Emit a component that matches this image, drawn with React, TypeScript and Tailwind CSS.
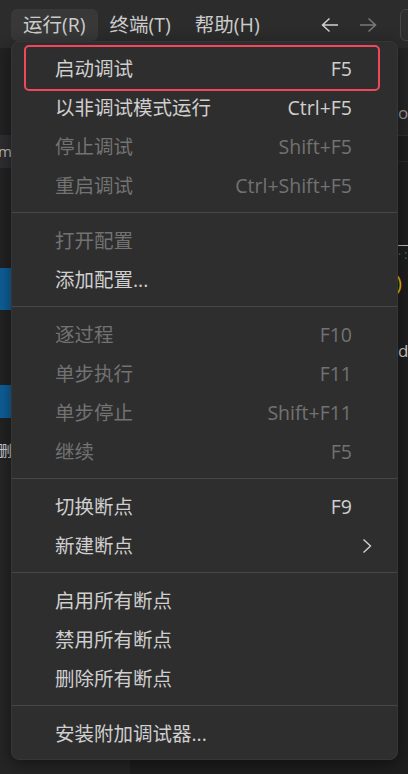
import { ReactNode } from 'react';

type Item = {
  label: string;
  shortcut?: string;
  disabled?: boolean;
  submenu?: boolean;
};

const groups: Item[][] = [
  [
    { label: '启动调试', shortcut: 'F5' },
    { label: '以非调试模式运行', shortcut: 'Ctrl+F5' },
    { label: '停止调试', shortcut: 'Shift+F5', disabled: true },
    { label: '重启调试', shortcut: 'Ctrl+Shift+F5', disabled: true }
  ],
  [
    { label: '打开配置', disabled: true },
    { label: '添加配置...' }
  ],
  [
    { label: '逐过程', shortcut: 'F10', disabled: true },
    { label: '单步执行', shortcut: 'F11', disabled: true },
    { label: '单步停止', shortcut: 'Shift+F11', disabled: true },
    { label: '继续', shortcut: 'F5', disabled: true }
  ],
  [
    { label: '切换断点', shortcut: 'F9' },
    { label: '新建断点', submenu: true }
  ],
  [
    { label: '启用所有断点' },
    { label: '禁用所有断点' },
    { label: '删除所有断点' }
  ],
  [{ label: '安装附加调试器...' }]
];

const font = "font-['Open_Sans','Noto_Sans_CJK_SC',sans-serif]";

function MenuButton({ children, active }: { children: ReactNode; active?: boolean }) {
  return (
    <div
      className={`h-8 px-[12px] shrink-0 whitespace-nowrap flex items-center rounded-md text-[19.5px] text-[#cccccc] ${
        active ? 'bg-[#383838]' : ''
      }`}
    >
      {children}
    </div>
  );
}

function MenuRow({ item, first }: { item: Item; first?: boolean }) {
  return (
    <div
      className={`relative h-[39px] flex items-center pl-[43px] pr-[45px] text-[19.5px] ${
        item.disabled ? 'text-[#727272]' : 'text-[#cfcfcf]'
      }`}
    >
      {first && (
        <span className="absolute left-[12px] right-[17px] top-[-4px] bottom-[-3px] rounded-[5px] border-2 border-[#f0475b]" />
      )}
      <span className="flex-1 whitespace-nowrap">{item.label}</span>
      {item.shortcut && <span className="whitespace-nowrap">{item.shortcut}</span>}
      {item.submenu && (
        <svg width="12" height="16" viewBox="0 0 12 16" className="-mr-[21px]">
          <path d="M2.5 1.5 L9.5 8 L2.5 14.5" fill="none" stroke="#cfcfcf" strokeWidth="1.4" />
        </svg>
      )}
    </div>
  );
}

export default function App() {
  return (
    <div className={`relative w-[408px] h-[774px] overflow-hidden bg-[#1f1f1f] ${font}`}>
      {/* title bar */}
      <div className="h-12 flex items-center pl-[11px] pt-[1px] bg-[#2c2c2c] overflow-hidden">
        <MenuButton active>运行(R)</MenuButton>
        <MenuButton>终端(T)</MenuButton>
        <MenuButton>帮助(H)</MenuButton>
        <svg width="18" height="16" viewBox="0 0 18 16" className="ml-[49px] shrink-0">
          <path d="M17 8 H1.5 M8.5 1.5 L1.5 8 L8.5 14.5" fill="none" stroke="#d0d0d0" strokeWidth="1.5" />
        </svg>
        <svg width="18" height="16" viewBox="0 0 18 16" className="ml-[20px] shrink-0">
          <path d="M1 8 H16.5 M9.5 1.5 L16.5 8 L9.5 14.5" fill="none" stroke="#7a7a7a" strokeWidth="1.5" />
        </svg>
        <div className="ml-[23px] h-8 w-[200px] shrink-0 rounded-md border border-[#464646] bg-[#2f2f2f]" />
      </div>

      {/* workbench behind the menu */}
      <div className="flex h-[726px]">
        <div className="w-[130px] flex flex-col bg-[#222222]">
          <div className="h-[87px]" />
          <div className="h-[33px] bg-[#2e2e31] flex items-center justify-end pr-[118px] text-[15px] text-[#bbbbbb]">
            m
          </div>
          <div className="h-[100px]" />
          <div className="h-[42px] bg-[#0e5e98]" />
          <div className="h-[75px]" />
          <div className="h-[33px] bg-[#0e5e98]" />
          <div className="h-[22px]" />
          <div className="h-[20px] flex items-center justify-end pr-[118px] text-[15px] text-[#cccccc]">删</div>
          <div className="flex-1 bg-[#252525]" />
        </div>
        <div className="flex-1 flex flex-col bg-[#1e1e1e] text-[17px]">
          <div className="h-[88px] bg-[#252526] border-b border-[#303030] flex items-end pb-[10px] pl-[268px] text-[#9a9a9a]">
            op
          </div>
          <div className="h-[26px] border-b border-[#2a2a2a]" />
          <div className="h-[84px] border-b border-[#bdbdbd]" />
          <div className="h-[22px] pl-[268px] text-[#3a7a9a] text-[12px]">· :</div>
          <div className="h-[30px] pl-[266px] text-[#e5c000] text-[20px]">)</div>
          <div className="h-[40px]" />
          <div className="h-[30px] pl-[268px] text-[#cccccc]">d</div>
        </div>
      </div>

      {/* run menu */}
      <div className="absolute left-[11px] top-[41px] w-[387px] pt-[7px] pb-[5.5px] rounded-lg bg-[#2e2e2e] border border-[#363636] shadow-[0_4px_16px_rgba(0,0,0,0.45)]">
        {groups.map((group, gi) => (
          <div key={gi}>
            {gi > 0 && <div className="mt-[7px] mb-[8px] h-px bg-[#474747]" />}
            {group.map((item, ii) => (
              <MenuRow key={item.label} item={item} first={gi === 0 && ii === 0} />
            ))}
          </div>
        ))}
      </div>
    </div>
  );
}
